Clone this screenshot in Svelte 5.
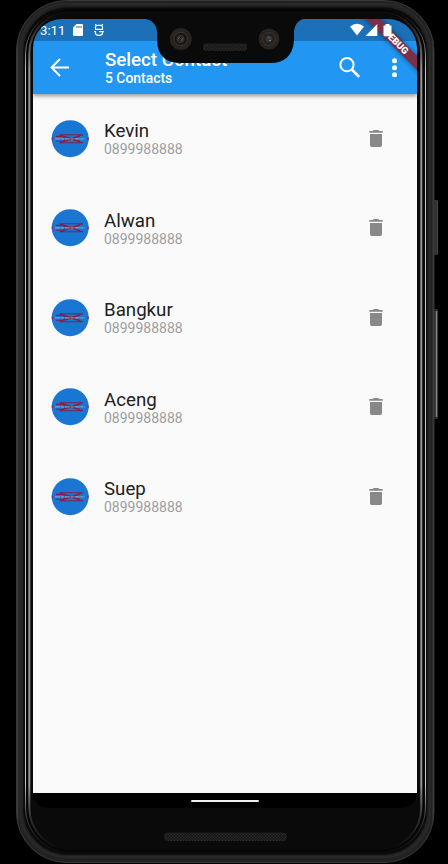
<script>
  const contacts = ['Kevin', 'Alwan', 'Bangkur', 'Aceng', 'Suep'];
  const phone = '0899988888';
</script>

<div class="stage">
  <svg class="shell" width="448" height="864" viewBox="0 0 448 864">
    <defs>
      <linearGradient id="outer" x1="0" x2="1" y1="0" y2="0">
        <stop offset="0" stop-color="#484848" /><stop offset=".006" stop-color="#222" />
        <stop offset=".5" stop-color="#202020" /><stop offset=".994" stop-color="#222" />
        <stop offset="1" stop-color="#404040" />
      </linearGradient>
      <linearGradient id="shine" gradientUnits="userSpaceOnUse" x1="0" x2="0" y1="10" y2="852">
        <stop offset="0" stop-color="#999" stop-opacity="0" /><stop offset=".035" stop-color="#aaa" stop-opacity=".45" />
        <stop offset=".07" stop-color="#c4c4c4" /><stop offset=".92" stop-color="#c4c4c4" />
        <stop offset=".96" stop-color="#999" stop-opacity=".35" /><stop offset="1" stop-color="#999" stop-opacity="0" />
      </linearGradient>
      <pattern id="mesh" width="3" height="3" patternUnits="userSpaceOnUse">
        <rect width="3" height="3" fill="#191919" /><path d="M0 0h1v1H0zM1.5 1.5h1v1h-1z" fill="#303030" />
      </pattern>
    </defs>
    <rect width="448" height="864" fill="#000" />
    <rect x="433" y="200" width="5" height="55" rx="1" fill="#303030" />
    <path d="M437.5 201v53" stroke="#484848" />
    <rect x="433" y="309" width="5" height="110" rx="1" fill="#292929" />
    <path d="M436.5 311v106" stroke="#858585" stroke-width="1.5" />
    <rect x="16.5" y=".5" width="417.5" height="862" rx="50" fill="url(#outer)" stroke="#383838" />
    <rect x="20.5" y="4" width="409.5" height="853" rx="46" fill="none" stroke="#292929" stroke-width="2" />
    <rect x="23.5" y="7.5" width="403.5" height="847" rx="44" fill="#0a0a0a" stroke="#111" />
    <rect x="25.5" y="10" width="400" height="842" rx="44" fill="none" stroke="url(#shine)" />
    <rect x="27.5" y="10.5" width="395.5" height="840" rx="43" fill="none" stroke="#050505" stroke-width="2" />
    <rect x="29.3" y="11.5" width="392" height="838" rx="42" fill="none" stroke="url(#shine)" stroke-opacity=".75" stroke-width="2" />
    <rect x="31" y="13" width="388.5" height="836" rx="40" fill="#0a0a0a" />
    <rect x="164" y="832.5" width="123" height="8.5" rx="4" fill="url(#mesh)" />
  </svg>

  <main class="screen">
    <div class="status">
      <span>3:11</span>
      <svg class="sd" width="10" height="12" viewBox="0 0 10 12"><path d="M3.5 0H9q1 0 1 1v10q0 1-1 1H1q-1 0-1-1V3.5z" fill="#fff" /><path d="M4 2v2M6 2v2M8 2v2" stroke="#1b70b8" /></svg>
      <svg class="bug" width="10" height="12" viewBox="0 0 10 12" fill="none" stroke="#fff" stroke-width="1.2"><path d="M1.300 0l.8 1.200M8.700 0l-.8 1.200M1.500 5.400V3q0-1.600 2-1.600h3q2 0 2 1.600v2.400zM5 7.600h4.800M.2 7.600h1.600M1.500 7v2q0 2.300 3.500 2.300T8.500 9V7.600" /></svg>
      <svg class="signals" width="28" height="14" viewBox="0 0 28 14" fill="#fff">
        <path d="M0 3.500Q7-2 14 3.500L7 12.500z" /><path d="M27.300 1v12H15.500z" />
      </svg>
    </div>

    <header>
      <svg width="20" height="19" viewBox="0 0 20 19" fill="none" stroke="#fff" stroke-width="2"><path d="M19 9.500H2M10 1L1.600 9.500 10 18" /></svg>
      <div class="heading">
        <h1>Select Contact</h1>
        <p>5 Contacts</p>
      </div>
      <svg class="search" width="22" height="22" viewBox="0 0 22 22" fill="none" stroke="#fff"><circle cx="8" cy="7.7" r="6.6" stroke-width="2" /><path d="M13 12.700l7.200 7.200" stroke-width="2.700" /></svg>
      <svg class="more" width="6" height="20" viewBox="0 0 6 20" fill="#fff"><circle cx="2.500" cy="2.800" r="2.500" /><circle cx="2.500" cy="9.800" r="2.500" /><circle cx="2.500" cy="16.800" r="2.500" /></svg>
    </header>

    <ul>
      {#each contacts as name}
        <li>
          <svg width="38" height="38" viewBox="0 0 38 38">
            <circle cx="19.200" cy="18.700" r="18.500" fill="#1976d2" />
            <g fill="none" stroke="#82214b" stroke-width="1.100">
              <path d="M8.500 14.800h23.500M8.500 22.800h23.500M5 16.400h6L32 22.800M5 21.200h6L32 14.800M8.500 14.800L29 21.300M8.500 22.800L29 16.300" />
            </g>
            <path d="M4 18.900h30" stroke="#9eacc6" stroke-width="1" stroke-dasharray="5 .8 3 1" />
            <path d="M1.300 17.300v3M37.100 17.300v3" stroke="#7d2350" stroke-width="1" />
          </svg>
          <div class="person"><h2>{name}</h2><p>{phone}</p></div>
          <svg class="trash" width="14" height="18" viewBox="0 0 14 18" fill="#888"><path d="M1 4h12v11.300q0 1.700-1.800 1.700H2.800Q1 17 1 15.300zM.3 1h3.500L4.700 0h4.600l.9 1h3.500v1.700H.3z" /></svg>
        </li>
      {/each}
    </ul>

    <nav><i></i></nav>
    <div class="ribbon">DEBUG</div>
    <svg class="battery" width="9" height="13" viewBox="0 0 9 13"><path d="M2.500 0h4v1.400H8q.5 0 .5.600v9.500q0 .8-.8.8H1.300q-.8 0-.8-.8V2q0-.6.500-.6h1.500z" fill="#fff" /></svg>
  </main>

  <svg class="notch" width="172" height="47" viewBox="0 0 172 47">
    <path d="M0 0Q18 0 19 14V23Q20 45 43 45H132Q154 45 156 23V14Q157 0 172 0z" fill="#0a0a0a" />
    <g><circle cx="42.800" cy="21" r="11" fill="#28231f" /><circle cx="42.800" cy="21" r="6.800" fill="#171716" stroke="#393735" /><circle cx="42.500" cy="21" r="3.500" fill="#292725" stroke="#3d3b39" /><path d="M40 21l2-2M43 23l2-3" stroke="#655c56" /></g>
    <g><circle cx="131" cy="21" r="10.500" fill="#28231f" /><circle cx="131" cy="21" r="6.500" fill="#222221" stroke="#373533" /><circle cx="131" cy="21" r="3.300" fill="#343635" /><path d="M130 18.500l2 2M131 22.500h2" stroke="#727775" /></g>
    <rect x="65" y="25.500" width="44" height="7.500" rx="3" fill="url(#mesh)" />
  </svg>
</div>

<style>
  :global(body) { margin: 0; background: #000; }
  .stage { position: relative; width: 448px; height: 864px; overflow: hidden; box-sizing: border-box; padding: 19px 31px 56px 33px; font-family: Roboto, sans-serif; }
  .shell { position: absolute; left: 0; top: 0; }
  svg { display: block; flex: none; }
  h1, h2, p, ul { margin: 0; padding: 0; }
  .screen { position: relative; display: flex; flex-direction: column; width: 384px; height: 789px; overflow: hidden; border-radius: 29px 29px 15px 15px; }
  .status { flex: none; height: 22px; display: flex; align-items: center; box-sizing: border-box; padding-left: 7px; color: #fff; background: #1b70b8; font-size: 13.2px; }
  .status span { width: 26px; padding-top: 1px; }
  .sd { margin-left: 7px; }
  .bug { margin-left: 11px; }
  .signals { position: relative; z-index: 2; margin-left: 246px; }
  header { position: relative; flex: none; display: flex; align-items: center; box-sizing: border-box; height: 53px; padding-left: 17px; color: #fff; background: #2196f3; box-shadow: 0 2px 4px #0006; clip-path: inset(0 0 -10px 0); }
  .heading { width: 225px; margin-left: 35px; padding-top: 1px; }
  h1 { font-size: 18.7px; line-height: 20px; font-weight: 500; white-space: nowrap; }
  .heading p { font-size: 13.9px; line-height: 16px; font-weight: 500; }
  .search { margin-left: 9px; }
  .more { margin-left: 31px; }
  ul { flex: 1; list-style: none; background: #fafafa; }
  li { display: flex; align-items: center; height: 89.5px; padding: 0 34px 0 18px; }
  .person { flex: 1; margin-left: 15px; padding-top: 1px; }
  h2 { font-size: 18.7px; line-height: 20px; font-weight: 400; color: #212121; }
  .person p { font-size: 14px; line-height: 16px; color: #9e9e9e; }
  nav { flex: none; height: 15px; background: #000; display: flex; justify-content: center; }
  nav i { width: 68px; height: 2px; margin-top: 7px; border-radius: 1px; background: #efeeea; }
  .ribbon { position: absolute; left: 312.5px; top: 18px; width: 100px; height: 10px; color: #fff; background: #7b2f49; transform: rotate(45deg); text-align: center; font-size: 9.5px; line-height: 10px; font-weight: 900; box-shadow: 0 0 5px #0007; }
  .battery { position: absolute; left: 350px; top: 5px; }
  .notch { position: absolute; left: 138px; top: 18px; }
</style>
